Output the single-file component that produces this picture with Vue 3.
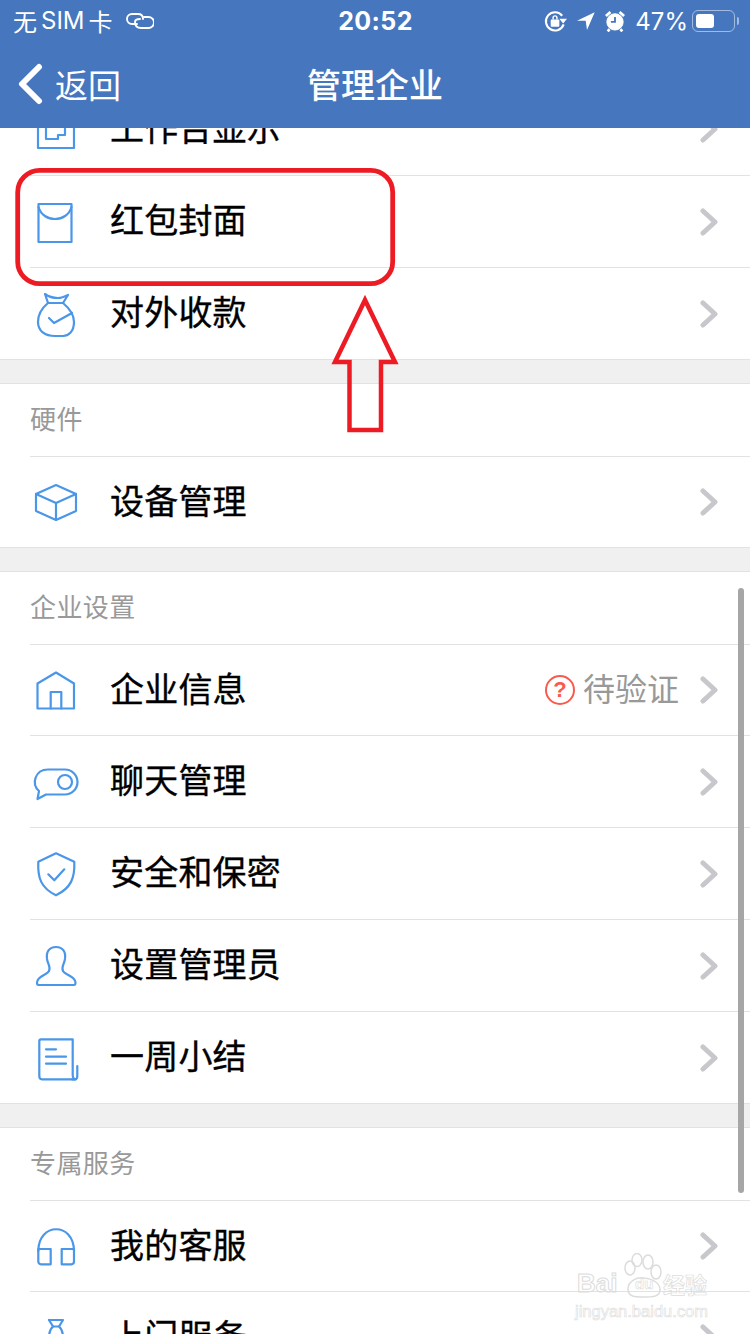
<script setup>
const icons = {
  desk: ['M8 9H44V47H8Z', 'M16 27V38H28V34H35V27'],
  packet: ['M8.500 10H41.500V48H8.500Z', 'M8.500 13C13 29 37 29 41.500 13'],
  bag: [
    'M15 8C19 11 25 12 28 12C31 12 34 11 38 9L33 17H18Z',
    'M18 17C12 22 8 28 8 36C8 45 15 50 25 50H33C38 50 44 46 44 36C44 28 39 22 33 17',
    'M19 32L24 37L42 27'
  ],
  box: ['M26 11L46 20V37L26 46L6 37V20Z', 'M6 20L26 29L46 20', 'M26 29V46'],
  home: ['M7.500 21.500L26 10.500L44 21.500V46.500H7.500Z', 'M20.700 46.500V30H31.300V46.500'],
  chat: [
    'M18 15.500H35A12.500 12.500 0 0 1 35 40.500H16L7.500 45L9 37C1 30 5 15.500 18 15.500Z',
    'M28 28A7 7 0 1 0 42 28A7 7 0 1 0 28 28Z'
  ],
  shield: [
    'M26 7.300L44.300 15.700C45 32 41 42 26 49.300C11 42 7.500 32 8.300 15.700Z',
    'M18.300 28.300L24.300 34.300L34.300 23.300'
  ],
  user: [
    'M26 9C33 9 36 14 35 21C34 27 31 29 33 33C35 37 45.500 38 45.500 44.500C45.500 46 45 47 44 47H8.500C7.500 47 7 46 7 44.500C7 38 17 37 19 33C21 29 18 27 17 21C16 14 19 9 26 9Z'
  ],
  note: [
    'M11 9.300H42.700V45C42.700 48 44 49.300 46 49.300H12C10 49.300 9.300 48 9.300 46V11C9.300 10 10 9.300 11 9.300Z',
    'M16 19.300H26', 'M16 26.700H36', 'M16 33.700H36',
    'M42 49.300H45C46.500 49.300 47.300 48 47.300 46V36'
  ],
  phones: [
    'M8.300 33C8.300 4 44 4 44 33',
    'M8.300 31H20.700V46.300H11A2.700 2.700 0 0 1 8.300 43.600Z',
    'M31.700 31H44V43.600A2.700 2.700 0 0 1 41.300 46.300H31.700Z'
  ],
  glass: ['M19 10H33L29 16.500C33 20 33 24 33 28', 'M23 16.500C19 20 19 24 19 28', 'M19 10L23 16.500H29']
}
const sections = [
  { title: '', rows: [
    { key: 'desk', label: '工作台显示' },
    { key: 'packet', label: '红包封面' },
    { key: 'bag', label: '对外收款' }
  ] },
  { title: '硬件', rows: [{ key: 'box', label: '设备管理' }] },
  { title: '企业设置', rows: [
    { key: 'home', label: '企业信息', pending: true },
    { key: 'chat', label: '聊天管理' },
    { key: 'shield', label: '安全和保密' },
    { key: 'user', label: '设置管理员' },
    { key: 'note', label: '一周小结' }
  ] },
  { title: '专属服务', rows: [
    { key: 'phones', label: '我的客服' },
    { key: 'glass', label: '上门服务' }
  ] }
]
</script>

<template>
  <div class="phone">
    <header class="top">
      <div class="status">
        <div class="status-left">
          <span class="carrier">无<span class="sim">SIM</span>卡</span>
          <svg class="link" width="28" height="16" viewBox="0 0 28 16" fill="none" stroke="#fff" stroke-width="1.900" stroke-linecap="round">
            <path d="M11 11H6A5 5 0 0 1 6 1H12C15 1 17 3 17 6" />
            <path d="M18 4H22.500A5.500 5.500 0 0 1 22.500 15H15C11 15 9 13 9 9C9 7 11 6 14 6" />
          </svg>
        </div>
        <div class="clock">20:52</div>
        <div class="status-right">
          <svg width="23" height="23" viewBox="0 0 24 24" fill="none" stroke="#fff" stroke-width="2.200">
            <path d="M20.500 15A9.500 9.500 0 1 1 19 6" />
            <path d="M16 9H24L20 14Z" fill="#fff" stroke="none" />
            <rect x="7" y="10" width="9" height="7.500" rx="1" fill="#fff" stroke="none" />
            <path d="M9.500 10V8C9.500 5.500 13.500 5.500 13.500 8V10" stroke-width="1.500" />
          </svg>
          <svg width="18" height="20" viewBox="0 0 18 20" fill="#fff"><path d="M17.700 1.300L0 9.700H8.700L10 19Z" /></svg>
          <svg width="20" height="22" viewBox="0 0 22 24" fill="none" stroke="#fff">
            <circle cx="11" cy="13" r="9" fill="#fff" />
            <path d="M11 7.500V13H6.500" stroke="#4676be" stroke-width="2" />
            <path d="M1 6.500L6 2M16 2L21 6.500M5 21L3 23.500M17 21L19 23.500" stroke-width="3" />
          </svg>
          <span class="pct">47%</span>
          <div class="battery"><div class="battery-level"></div></div>
          <div class="battery-cap"></div>
        </div>
      </div>
      <nav class="nav">
        <div class="back">
          <svg width="26" height="42" viewBox="0 0 26 42" fill="none" stroke="#fff" stroke-width="6" stroke-linecap="round" stroke-linejoin="round">
            <path d="M22 4L5 21L22 38" />
          </svg>
          <span>返回</span>
        </div>
        <div class="nav-title">管理企业</div>
      </nav>
    </header>

    <main class="list">
      <section v-for="(section, i) in sections" :key="i" class="section">
        <h2 v-if="section.title" class="section-title">{{ section.title }}</h2>
        <div v-for="row in section.rows" :key="row.key" class="row">
          <svg class="row-icon" width="52" height="56" viewBox="0 0 52 56" fill="none" stroke="#4a96e8" stroke-width="2.200" stroke-linejoin="round" stroke-linecap="round">
            <path v-for="(d, n) in icons[row.key]" :key="n" :d="d" />
          </svg>
          <span class="row-label">{{ row.label }}</span>
          <div v-if="row.pending" class="pending">
            <span class="question">?</span>
            <span class="pending-text">待验证</span>
          </div>
          <svg class="chevron" width="18" height="28" viewBox="0 0 18 28" fill="none" stroke="#c8c8cc" stroke-width="5" stroke-linecap="round" stroke-linejoin="round">
            <path d="M3 3L15 14L3 25" />
          </svg>
        </div>
      </section>
    </main>

    <div class="scrollbar"></div>

    <svg class="mark" width="750" height="1334" viewBox="0 0 750 1334" fill="none">
      <rect x="17.700" y="170.300" width="375" height="113.400" rx="22" stroke="#ed1c24" stroke-width="4.800" />
      <path d="M365 300L395 362H381V430H349.500V362H335Z" stroke="#ed1c24" stroke-width="4.500" stroke-linejoin="miter" />
    </svg>

    <div class="watermark">
      <svg width="92" height="46" viewBox="0 0 92 46" fill="none" stroke="#dcdcdc" stroke-width="1.500">
        <ellipse cx="55" cy="15" rx="5" ry="7" />
        <ellipse cx="62" cy="7" rx="5" ry="6.500" />
        <ellipse cx="73" cy="9" rx="5" ry="7" />
        <ellipse cx="81" cy="19" rx="5" ry="7" />
        <path d="M53 36C53 28 62 24 69 25C78 26 85 30 85 37C85 44 77 44 69 44C60 44 53 44 53 36Z" />
      </svg>
      <div class="wm-main">
        <span class="wm-bai">Bai</span>
        <span class="wm-du">du</span>
        <span class="wm-jy">经验</span>
      </div>
      <div class="wm-sub">jingyan.baidu.com</div>
    </div>
  </div>
</template>

<style>
html, body { margin: 0; background: #fff; }
</style>

<style scoped>
.phone {
  position: relative;
  width: 750px;
  height: 1334px;
  overflow: hidden;
  display: flex;
  flex-direction: column;
  background: #f0f0f0;
  font-family: "Noto Sans CJK SC", "Liberation Sans", sans-serif;
}
.top {
  position: relative;
  z-index: 2;
  flex: none;
  height: 128px;
  background: #4676be;
  color: #fff;
}
.status {
  height: 42px;
  padding: 0 11px 0 13px;
  display: grid;
  grid-template-columns: 1fr auto 1fr;
  align-items: center;
  font-size: 24px;
}
.status-left { display: flex; align-items: center; gap: 13px; }
.carrier { display: flex; align-items: center; gap: 4px; line-height: 30px; }
.sim { font-family: Inter, "Liberation Sans", sans-serif; font-size: 24px; }
.clock {
  font-family: Inter, "Liberation Sans", sans-serif;
  font-size: 25px;
  font-weight: 700;
  letter-spacing: .4px;
  margin-left: -1px;
}
.status-right {
  display: flex;
  align-items: center;
  justify-content: flex-end;
  gap: 10px;
}
.pct { font-family: Inter, "Liberation Sans", sans-serif; font-size: 24px; }
.battery {
  box-sizing: border-box;
  width: 43px;
  height: 22px;
  margin-left: -6px;
  padding: 3px;
  border: 1.500px solid rgba(255, 255, 255, .5);
  border-radius: 6px;
}
.battery-level { width: 18px; height: 100%; background: #fff; border-radius: 3px; }
.battery-cap {
  width: 2px;
  height: 8px;
  margin-left: -8px;
  background: rgba(255, 255, 255, .5);
  border-radius: 0 2px 2px 0;
}
.nav {
  box-sizing: border-box;
  height: 86px;
  padding: 0 0 3px 17px;
  display: grid;
  grid-template-columns: 1fr auto 1fr;
  align-items: center;
}
.back {
  display: flex;
  align-items: center;
  gap: 12px;
  font-size: 33px;
  line-height: 42px;
}
.nav-title { font-size: 34px; line-height: 42px; font-weight: 500; margin-left: -17px; }
.list {
  flex: none;
  margin-top: -46px;
  display: flex;
  flex-direction: column;
  gap: 23px;
}
.section {
  background: #fff;
  border-top: 1px solid #e2e2e2;
  border-bottom: 1px solid #e2e2e2;
  padding-left: 30px;
}
.section-title {
  box-sizing: border-box;
  height: 72px;
  margin: 0;
  padding-bottom: 6px;
  display: flex;
  align-items: center;
  font-size: 26px;
  font-weight: 400;
  letter-spacing: .4px;
  color: #999;
}
.row {
  box-sizing: border-box;
  height: 92px;
  display: flex;
  align-items: center;
  padding-right: 32px;
  border-top: 1px solid #e2e2e2;
}
.section-title + .row { height: 91px; }
.section:first-child .row:first-child { border-top: 0; }
.row-icon { width: 52px; flex: none; margin-right: 28px; }
.row-label {
  flex: 1;
  padding-bottom: 6px;
  font-size: 34px;
  letter-spacing: .2px;
  color: #000;
  -webkit-text-stroke: .35px #000;
}
.pending {
  display: flex;
  align-items: center;
  gap: 8px;
  margin-right: 21px;
  font-size: 32px;
  color: #999;
}
.pending-text { padding-bottom: 6px; }
.question {
  box-sizing: border-box;
  width: 30px;
  height: 30px;
  display: flex;
  align-items: center;
  justify-content: center;
  border: 2px solid #fa5a4d;
  border-radius: 50%;
  color: #fa5a4d;
  font-family: "Liberation Sans", sans-serif;
  font-size: 22px;
  font-weight: 700;
}
.mark { position: absolute; left: 0; top: 0; z-index: 3; pointer-events: none; }
.scrollbar {
  position: absolute;
  z-index: 1;
  left: 738px;
  top: 588px;
  width: 6px;
  height: 605px;
  border-radius: 3px;
  background: #a6a6a6;
}
.watermark {
  position: absolute;
  z-index: 3;
  left: 575px;
  top: 1253px;
  width: 140px;
  color: transparent;
  -webkit-text-stroke: 1px #dcdcdc;
}
.watermark svg { position: absolute; left: 0; top: 0; }
.wm-main {
  display: flex;
  align-items: center;
  height: 24px;
  margin-top: 18px;
  padding-left: 2px;
  white-space: nowrap;
  font-family: "Liberation Sans", "Noto Sans CJK SC", sans-serif;
  font-weight: 700;
}
.wm-bai { width: 41px; font-size: 26px; }
.wm-du { width: 18px; margin-left: 17px; font-size: 15px; -webkit-text-stroke-width: .6px; }
.wm-jy {
  margin-left: 10px;
  font-family: "Noto Sans CJK SC", sans-serif;
  font-size: 22px;
  -webkit-text-stroke-width: .7px;
}
.wm-sub {
  margin-top: 6px;
  font-family: "Liberation Sans", sans-serif;
  font-size: 16.500px;
  line-height: 20px;
  white-space: nowrap;
  -webkit-text-stroke-width: .6px;
}
</style>
